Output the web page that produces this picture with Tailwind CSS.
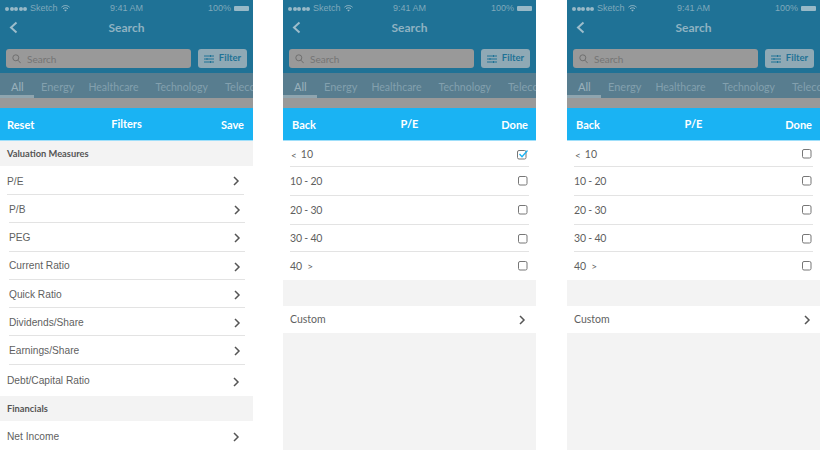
<!DOCTYPE html>
<html lang="en">
<head>
    <meta charset="UTF-8">
    <title>Filters</title>
    <script src="https://cdn.jsdelivr.net/npm/@tailwindcss/browser@4"></script>
</head>
<body class="bg-white h-[450px] w-[820px] overflow-hidden flex font-['Lato',sans-serif]">

<!-- Panel 1: Filters -->
<section class="w-[253px] h-[450px] flex flex-col overflow-hidden">
    <div class="h-[73px] bg-[#1f7296] flex flex-col shrink-0">
        <div class="h-[16px] flex items-center justify-between pl-[5px] pr-[4px] pt-[1px] text-[#7fa9bb] text-[9px] font-['Liberation_Sans',sans-serif] relative">
            <div class="flex items-center gap-[3px]">
                <span class="flex gap-[0.5px]"><i class="w-[4px] h-[4px] rounded-full bg-[#98b9c7]"></i><i class="w-[4px] h-[4px] rounded-full bg-[#98b9c7]"></i><i class="w-[4px] h-[4px] rounded-full bg-[#98b9c7]"></i><i class="w-[4px] h-[4px] rounded-full bg-[#98b9c7]"></i><i class="w-[4px] h-[4px] rounded-full bg-[#98b9c7]"></i></span>
                <span>Sketch</span>
                <svg width="9" height="7" viewBox="0 0 9 7" fill="none" stroke="#98b9c7"><path d="M.5 2.2C3 0 6 0 8.5 2.2M2 3.7c1.5-1.2 3.500-1.200 5 0"/><path d="M4.500 6.500 3.200 5c.8-.5 1.800-.5 2.600 0z" fill="#98b9c7" stroke="none"/></svg>
            </div>
            <span class="absolute left-[110px]">9:41 AM</span>
            <div class="flex items-center gap-[3px]">
                <span>100%</span>
                <span class="w-[15px] h-[5px] bg-[#98b9c7] rounded-[1px]"></span>
            </div>
        </div>
        <div class="h-[24px] flex items-center justify-center relative">
            <svg class="absolute left-[9px] top-[5px]" width="9" height="13" viewBox="0 0 9 13" fill="none" stroke="#9dbdcb" stroke-width="2"><path d="M7.500 1.500 2 6.500l5.500 5"/></svg>
            <span class="text-[#8fb2c2] text-[12px] font-bold">Search</span>
        </div>
        <div class="flex gap-[7px] pl-[6px] pr-[6px] pt-[9px]">
            <div class="w-[185px] h-[19px] bg-[#999999] rounded-[3px] flex items-center pl-[6px] gap-[6px] text-[#757575] text-[10px]">
                <svg width="9" height="10" viewBox="0 0 9 10" fill="none" stroke="#6f6f6f" stroke-width="1"><circle cx="3.800" cy="3.800" r="3"/><path d="m6 6.200 2.700 3"/></svg>
                <span class="pt-[1px]">Search</span>
            </div>
            <div class="w-[49px] h-[19px] bg-[#8fa9b5] rounded-[3px] flex items-center justify-center gap-[5px] text-[#1f7296] text-[9.5px] font-bold">
                <svg width="10" height="8" viewBox="0 0 10 8" fill="none" stroke="#1f7296"><path d="M0 1h10M0 4h10M0 7h10"/><path d="M6.500 0v2M3 3v2M6.500 6v2"/></svg>
                <span>Filter</span>
            </div>
        </div>
    </div>
    <div class="h-[25px] bg-[#587d8f] flex text-[#83a0ae] text-[11px] shrink-0 overflow-hidden whitespace-nowrap relative">
        <span class="w-[34px] shrink-0 pl-[11px] pt-[6px] text-[#97afba] font-medium border-b-[3px] border-[#8fa5af]">All</span>
        <span class="shrink-0 pl-[7px] pt-[6px]">Energy</span>
        <span class="shrink-0 pl-[14px] pt-[7px] text-[10.500px]">Healthcare</span>
        <span class="shrink-0 pl-[17px] pt-[7px] text-[10.500px]">Technology</span>
        <span class="shrink-0 pl-[17px] pt-[6px]">Telecom</span>
    </div>
    <div class="h-[10px] bg-[#999999] shrink-0"></div>
    <div class="h-[33px] bg-[#1ab3f3] flex items-center justify-between px-[7px] text-white text-[11px] font-bold shrink-0 relative border-b border-[#9fdffa]">
        <span class="pt-[2px]">Reset</span>
        <span class="absolute left-0 right-0 text-center text-[11px]">Filters</span>
        <span class="pt-[2px] pr-[2px]">Save</span>
    </div>
    <div class="h-[25px] bg-[#f3f3f3] flex items-center pl-[7px] text-[#555555] text-[9.300px] font-bold shrink-0">Valuation Measures</div>
    <div class="flex flex-col text-[#5f5f5f] text-[10.200px] font-['Liberation_Sans',sans-serif]">
        <div class="h-[29px] ml-[7px] mr-[9px] flex items-center justify-between border-b border-[#e3e3e3] pr-[4px]"><span class="pt-[3px]">P/E</span><svg class="mt-[2px]" width="7" height="10" viewBox="0 0 7 10" fill="none" stroke="#555" stroke-width="1.500"><path d="m1 1 4 4-4 4"/></svg></div>
        <div class="h-[28px] ml-[9px] mr-[8px] flex items-center justify-between border-b border-[#e3e3e3] pr-[4px]"><span class="pt-[3px]">P/B</span><svg class="mt-[2px]" width="7" height="10" viewBox="0 0 7 10" fill="none" stroke="#555" stroke-width="1.500"><path d="m1 1 4 4-4 4"/></svg></div>
        <div class="h-[29px] ml-[9px] mr-[8px] flex items-center justify-between border-b border-[#e3e3e3] pr-[4px]"><span class="pt-[2px]">PEG</span><svg class="mt-[2px]" width="7" height="10" viewBox="0 0 7 10" fill="none" stroke="#555" stroke-width="1.500"><path d="m1 1 4 4-4 4"/></svg></div>
        <div class="h-[28px] ml-[9px] mr-[8px] flex items-center justify-between border-b border-[#e3e3e3] pr-[4px]"><span>Current Ratio</span><svg class="mt-[2px]" width="7" height="10" viewBox="0 0 7 10" fill="none" stroke="#555" stroke-width="1.500"><path d="m1 1 4 4-4 4"/></svg></div>
        <div class="h-[28px] ml-[9px] mr-[8px] flex items-center justify-between border-b border-[#e3e3e3] pr-[4px]"><span class="pt-[2px]">Quick Ratio</span><svg class="mt-[2px]" width="7" height="10" viewBox="0 0 7 10" fill="none" stroke="#555" stroke-width="1.500"><path d="m1 1 4 4-4 4"/></svg></div>
        <div class="h-[28px] ml-[9px] mr-[8px] flex items-center justify-between border-b border-[#e3e3e3] pr-[4px]"><span class="pt-[2px]">Dividends/Share</span><svg class="mt-[2px]" width="7" height="10" viewBox="0 0 7 10" fill="none" stroke="#555" stroke-width="1.500"><path d="m1 1 4 4-4 4"/></svg></div>
        <div class="h-[29px] ml-[9px] mr-[8px] flex items-center justify-between border-b border-[#e3e3e3] pr-[4px]"><span class="pt-[2px]">Earnings/Share</span><svg class="mt-[2px]" width="7" height="10" viewBox="0 0 7 10" fill="none" stroke="#555" stroke-width="1.500"><path d="m1 1 4 4-4 4"/></svg></div>
        <div class="h-[31px] ml-[7px] mr-[9px] flex items-center justify-between pr-[4px]"><span>Debt/Capital Ratio</span><svg class="mt-[2px]" width="7" height="10" viewBox="0 0 7 10" fill="none" stroke="#555" stroke-width="1.500"><path d="m1 1 4 4-4 4"/></svg></div>
    </div>
    <div class="h-[25px] bg-[#f3f3f3] flex items-center pl-[7px] text-[#555555] text-[9.300px] font-bold shrink-0">Financials</div>
    <div class="h-[29px] ml-[7px] mr-[9px] flex items-center justify-between pr-[4px] text-[#5f5f5f] text-[10.200px] font-['Liberation_Sans',sans-serif]"><span class="pt-[2px]">Net Income</span><svg class="mt-[2px]" width="7" height="10" viewBox="0 0 7 10" fill="none" stroke="#555" stroke-width="1.500"><path d="m1 1 4 4-4 4"/></svg></div>
</section>

<!-- Panel 2: P/E, first option checked -->
<section class="w-[253px] h-[450px] ml-[30px] flex flex-col overflow-hidden bg-[#f3f3f3]">
    <div class="h-[73px] bg-[#1f7296] flex flex-col shrink-0">
        <div class="h-[16px] flex items-center justify-between pl-[5px] pr-[4px] pt-[1px] text-[#7fa9bb] text-[9px] font-['Liberation_Sans',sans-serif] relative">
            <div class="flex items-center gap-[3px]">
                <span class="flex gap-[0.5px]"><i class="w-[4px] h-[4px] rounded-full bg-[#98b9c7]"></i><i class="w-[4px] h-[4px] rounded-full bg-[#98b9c7]"></i><i class="w-[4px] h-[4px] rounded-full bg-[#98b9c7]"></i><i class="w-[4px] h-[4px] rounded-full bg-[#98b9c7]"></i><i class="w-[4px] h-[4px] rounded-full bg-[#98b9c7]"></i></span>
                <span>Sketch</span>
                <svg width="9" height="7" viewBox="0 0 9 7" fill="none" stroke="#98b9c7"><path d="M.5 2.2C3 0 6 0 8.5 2.2M2 3.7c1.5-1.2 3.500-1.200 5 0"/><path d="M4.500 6.500 3.200 5c.8-.5 1.800-.5 2.600 0z" fill="#98b9c7" stroke="none"/></svg>
            </div>
            <span class="absolute left-[110px]">9:41 AM</span>
            <div class="flex items-center gap-[3px]">
                <span>100%</span>
                <span class="w-[15px] h-[5px] bg-[#98b9c7] rounded-[1px]"></span>
            </div>
        </div>
        <div class="h-[24px] flex items-center justify-center relative">
            <svg class="absolute left-[9px] top-[5px]" width="9" height="13" viewBox="0 0 9 13" fill="none" stroke="#9dbdcb" stroke-width="2"><path d="M7.500 1.500 2 6.500l5.500 5"/></svg>
            <span class="text-[#8fb2c2] text-[12px] font-bold">Search</span>
        </div>
        <div class="flex gap-[7px] pl-[6px] pr-[6px] pt-[9px]">
            <div class="w-[185px] h-[19px] bg-[#999999] rounded-[3px] flex items-center pl-[6px] gap-[6px] text-[#757575] text-[10px]">
                <svg width="9" height="10" viewBox="0 0 9 10" fill="none" stroke="#6f6f6f" stroke-width="1"><circle cx="3.800" cy="3.800" r="3"/><path d="m6 6.200 2.700 3"/></svg>
                <span class="pt-[1px]">Search</span>
            </div>
            <div class="w-[49px] h-[19px] bg-[#8fa9b5] rounded-[3px] flex items-center justify-center gap-[5px] text-[#1f7296] text-[9.5px] font-bold">
                <svg width="10" height="8" viewBox="0 0 10 8" fill="none" stroke="#1f7296"><path d="M0 1h10M0 4h10M0 7h10"/><path d="M6.500 0v2M3 3v2M6.500 6v2"/></svg>
                <span>Filter</span>
            </div>
        </div>
    </div>
    <div class="h-[25px] bg-[#587d8f] flex text-[#83a0ae] text-[11px] shrink-0 overflow-hidden whitespace-nowrap relative">
        <span class="w-[34px] shrink-0 pl-[11px] pt-[6px] text-[#97afba] font-medium border-b-[3px] border-[#8fa5af]">All</span>
        <span class="shrink-0 pl-[7px] pt-[6px]">Energy</span>
        <span class="shrink-0 pl-[14px] pt-[7px] text-[10.500px]">Healthcare</span>
        <span class="shrink-0 pl-[17px] pt-[7px] text-[10.500px]">Technology</span>
        <span class="shrink-0 pl-[17px] pt-[6px]">Telecom</span>
    </div>
    <div class="h-[10px] bg-[#999999] shrink-0"></div>
    <div class="h-[33px] bg-[#1ab3f3] flex items-center justify-between pl-[9px] pr-[8px] text-white text-[11px] font-bold shrink-0 relative border-b border-[#9fdffa]">
        <span class="pt-[2px]">Back</span>
        <span class="absolute left-0 right-0 text-center">P/E</span>
        <span class="pt-[2px]">Done</span>
    </div>
    <div class="bg-white flex flex-col text-[#5f5f5f] text-[10.500px] shrink-0">
        <div class="h-[26px] mx-[7px] flex items-center justify-between border-b border-[#e3e3e3] pr-[1px]"><span class="pl-[1px] pt-[3px] flex items-center gap-[4px]"><span class="text-[10px]">&lt;</span><span>10</span></span>
            <svg class="mt-[1px]" width="11" height="11" viewBox="0 0 11 11" fill="none"><rect x=".5" y="1.500" width="8.500" height="8.500" rx="1.500" stroke="#777"/><path d="m2.500 5 2.500 2.800L10.500 1.500" stroke="#1ab3f3" stroke-width="1.300"/></svg></div>
        <div class="h-[29px] mx-[7px] flex items-center justify-between border-b border-[#e3e3e3] pr-[1px]"><span class="pt-[1px] tracking-[-0.2px]">10 - 20</span>
            <svg width="10" height="10" viewBox="0 0 10 10" fill="none"><rect x=".5" y=".5" width="8.500" height="8.500" rx="1.500" stroke="#777"/></svg></div>
        <div class="h-[29px] mx-[7px] flex items-center justify-between border-b border-[#e3e3e3] pr-[1px]"><span class="pt-[1px] tracking-[-0.2px]">20 - 30</span>
            <svg width="10" height="10" viewBox="0 0 10 10" fill="none"><rect x=".5" y=".5" width="8.500" height="8.500" rx="1.500" stroke="#777"/></svg></div>
        <div class="h-[27px] mx-[7px] flex items-center justify-between border-b border-[#e3e3e3] pr-[1px]"><span class="pt-[2px] tracking-[-0.2px]">30 - 40</span>
            <svg class="mt-[1px]" width="10" height="10" viewBox="0 0 10 10" fill="none"><rect x=".5" y=".5" width="8.500" height="8.500" rx="1.500" stroke="#777"/></svg></div>
        <div class="h-[28px] mx-[7px] flex items-center justify-between pr-[1px]"><span class="pt-[1px] flex items-center gap-[5px]"><span>40</span><span class="text-[10px]">&gt;</span></span>
            <svg width="10" height="10" viewBox="0 0 10 10" fill="none"><rect x=".5" y=".5" width="8.500" height="8.500" rx="1.500" stroke="#777"/></svg></div>
    </div>
    <div class="h-[26px] shrink-0"></div>
    <div class="h-[27px] bg-white flex items-center justify-between pl-[7px] pr-[10px] text-[#5f5f5f] text-[10.500px] shrink-0"><span class="pt-[1px]">Custom</span><svg class="mt-[1px]" width="7" height="10" viewBox="0 0 7 10" fill="none" stroke="#555" stroke-width="1.500"><path d="m1 1 4 4-4 4"/></svg></div>
</section>

<!-- Panel 3: P/E, nothing checked -->
<section class="w-[253px] h-[450px] ml-[31px] flex flex-col overflow-hidden bg-[#f3f3f3]">
    <div class="h-[73px] bg-[#1f7296] flex flex-col shrink-0">
        <div class="h-[16px] flex items-center justify-between pl-[5px] pr-[4px] pt-[1px] text-[#7fa9bb] text-[9px] font-['Liberation_Sans',sans-serif] relative">
            <div class="flex items-center gap-[3px]">
                <span class="flex gap-[0.5px]"><i class="w-[4px] h-[4px] rounded-full bg-[#98b9c7]"></i><i class="w-[4px] h-[4px] rounded-full bg-[#98b9c7]"></i><i class="w-[4px] h-[4px] rounded-full bg-[#98b9c7]"></i><i class="w-[4px] h-[4px] rounded-full bg-[#98b9c7]"></i><i class="w-[4px] h-[4px] rounded-full bg-[#98b9c7]"></i></span>
                <span>Sketch</span>
                <svg width="9" height="7" viewBox="0 0 9 7" fill="none" stroke="#98b9c7"><path d="M.5 2.2C3 0 6 0 8.5 2.2M2 3.7c1.5-1.2 3.500-1.200 5 0"/><path d="M4.500 6.500 3.200 5c.8-.5 1.800-.5 2.600 0z" fill="#98b9c7" stroke="none"/></svg>
            </div>
            <span class="absolute left-[110px]">9:41 AM</span>
            <div class="flex items-center gap-[3px]">
                <span>100%</span>
                <span class="w-[15px] h-[5px] bg-[#98b9c7] rounded-[1px]"></span>
            </div>
        </div>
        <div class="h-[24px] flex items-center justify-center relative">
            <svg class="absolute left-[9px] top-[5px]" width="9" height="13" viewBox="0 0 9 13" fill="none" stroke="#9dbdcb" stroke-width="2"><path d="M7.500 1.500 2 6.500l5.500 5"/></svg>
            <span class="text-[#8fb2c2] text-[12px] font-bold">Search</span>
        </div>
        <div class="flex gap-[7px] pl-[6px] pr-[6px] pt-[9px]">
            <div class="w-[185px] h-[19px] bg-[#999999] rounded-[3px] flex items-center pl-[6px] gap-[6px] text-[#757575] text-[10px]">
                <svg width="9" height="10" viewBox="0 0 9 10" fill="none" stroke="#6f6f6f" stroke-width="1"><circle cx="3.800" cy="3.800" r="3"/><path d="m6 6.200 2.700 3"/></svg>
                <span class="pt-[1px]">Search</span>
            </div>
            <div class="w-[49px] h-[19px] bg-[#8fa9b5] rounded-[3px] flex items-center justify-center gap-[5px] text-[#1f7296] text-[9.5px] font-bold">
                <svg width="10" height="8" viewBox="0 0 10 8" fill="none" stroke="#1f7296"><path d="M0 1h10M0 4h10M0 7h10"/><path d="M6.500 0v2M3 3v2M6.500 6v2"/></svg>
                <span>Filter</span>
            </div>
        </div>
    </div>
    <div class="h-[25px] bg-[#587d8f] flex text-[#83a0ae] text-[11px] shrink-0 overflow-hidden whitespace-nowrap relative">
        <span class="w-[34px] shrink-0 pl-[11px] pt-[6px] text-[#97afba] font-medium border-b-[3px] border-[#8fa5af]">All</span>
        <span class="shrink-0 pl-[7px] pt-[6px]">Energy</span>
        <span class="shrink-0 pl-[14px] pt-[7px] text-[10.500px]">Healthcare</span>
        <span class="shrink-0 pl-[17px] pt-[7px] text-[10.500px]">Technology</span>
        <span class="shrink-0 pl-[17px] pt-[6px]">Telecom</span>
    </div>
    <div class="h-[10px] bg-[#999999] shrink-0"></div>
    <div class="h-[33px] bg-[#1ab3f3] flex items-center justify-between pl-[9px] pr-[8px] text-white text-[11px] font-bold shrink-0 relative border-b border-[#9fdffa]">
        <span class="pt-[2px]">Back</span>
        <span class="absolute left-0 right-0 text-center">P/E</span>
        <span class="pt-[2px]">Done</span>
    </div>
    <div class="bg-white flex flex-col text-[#5f5f5f] text-[10.500px] shrink-0">
        <div class="h-[26px] mx-[7px] flex items-center justify-between border-b border-[#e3e3e3] pr-[1px]"><span class="pl-[1px] pt-[3px] flex items-center gap-[4px]"><span class="text-[10px]">&lt;</span><span>10</span></span>
            <svg class="mt-[1px]" width="10" height="10" viewBox="0 0 10 10" fill="none"><rect x=".5" y=".5" width="8.500" height="8.500" rx="1.500" stroke="#777"/></svg></div>
        <div class="h-[29px] mx-[7px] flex items-center justify-between border-b border-[#e3e3e3] pr-[1px]"><span class="pt-[1px] tracking-[-0.2px]">10 - 20</span>
            <svg width="10" height="10" viewBox="0 0 10 10" fill="none"><rect x=".5" y=".5" width="8.500" height="8.500" rx="1.500" stroke="#777"/></svg></div>
        <div class="h-[29px] mx-[7px] flex items-center justify-between border-b border-[#e3e3e3] pr-[1px]"><span class="pt-[1px] tracking-[-0.2px]">20 - 30</span>
            <svg width="10" height="10" viewBox="0 0 10 10" fill="none"><rect x=".5" y=".5" width="8.500" height="8.500" rx="1.500" stroke="#777"/></svg></div>
        <div class="h-[27px] mx-[7px] flex items-center justify-between border-b border-[#e3e3e3] pr-[1px]"><span class="pt-[2px] tracking-[-0.2px]">30 - 40</span>
            <svg class="mt-[1px]" width="10" height="10" viewBox="0 0 10 10" fill="none"><rect x=".5" y=".5" width="8.500" height="8.500" rx="1.500" stroke="#777"/></svg></div>
        <div class="h-[28px] mx-[7px] flex items-center justify-between pr-[1px]"><span class="pt-[1px] flex items-center gap-[5px]"><span>40</span><span class="text-[10px]">&gt;</span></span>
            <svg width="10" height="10" viewBox="0 0 10 10" fill="none"><rect x=".5" y=".5" width="8.500" height="8.500" rx="1.500" stroke="#777"/></svg></div>
    </div>
    <div class="h-[26px] shrink-0"></div>
    <div class="h-[27px] bg-white flex items-center justify-between pl-[7px] pr-[9px] text-[#5f5f5f] text-[10.500px] shrink-0"><span class="pt-[1px]">Custom</span><svg class="mt-[1px]" width="7" height="10" viewBox="0 0 7 10" fill="none" stroke="#555" stroke-width="1.500"><path d="m1 1 4 4-4 4"/></svg></div>
</section>

</body>
</html>
